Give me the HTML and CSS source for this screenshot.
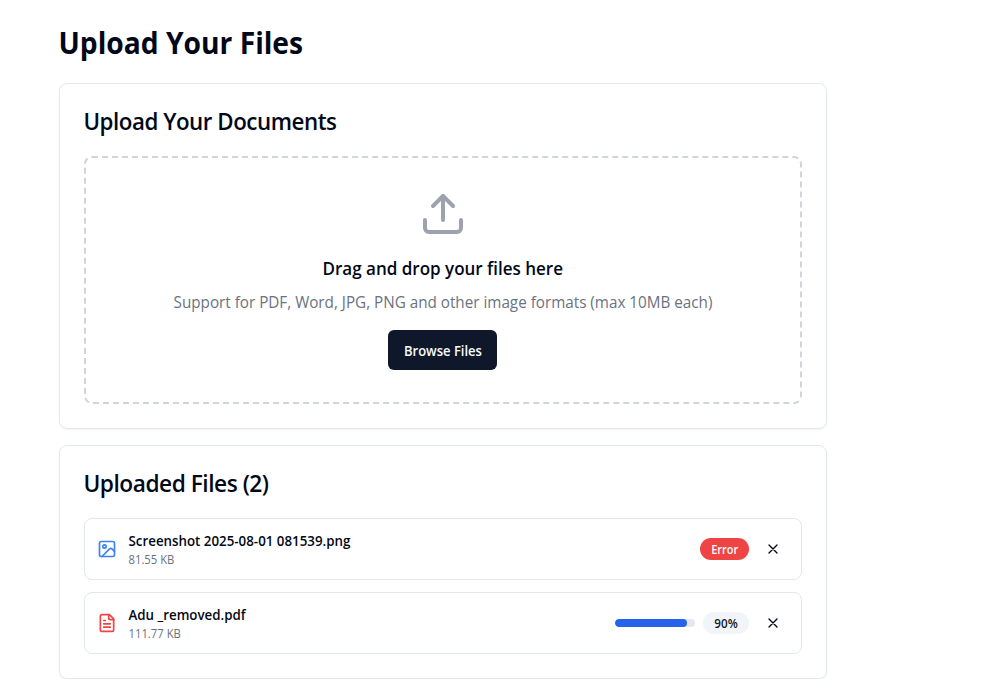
FILE: index.html
```html
<!DOCTYPE html>
<html lang="en">
<head>
<meta charset="utf-8">
<title>Upload Your Files</title>
<link rel="stylesheet" href="styles.css">
</head>
<body>
<main class="page">
  <h1><span class="t t-title">Upload Your Files</span></h1>
  <section class="card upload">
    <h2><span class="t t-docs">Upload Your Documents</span></h2>
    <div class="dropzone">
      <svg class="upload-icon" viewBox="0 0 24 24"><path d="M21 15v4a2 2 0 0 1-2 2H5a2 2 0 0 1-2-2v-4"/><path d="M17 8l-5-5-5 5"/><path d="M12 3v12"/></svg>
      <h3><span class="t t-drag">Drag and drop your files here</span></h3>
      <p class="hint"><span class="t t-hint">Support for PDF, Word, JPG, PNG and other image formats (max 10MB each)</span></p>
      <button class="browse"><span class="t t-browse">Browse Files</span></button>
    </div>
  </section>
  <section class="card files">
    <h2><span class="t t-files">Uploaded Files (2)</span></h2>
    <ul class="list">
      <li class="file">
        <svg class="icon blue" viewBox="0 0 24 24"><rect x="3" y="3" width="18" height="18" rx="2"/><circle cx="9" cy="9" r="2"/><path d="m21 15-3.086-3.086a2 2 0 0 0-2.828 0L6 21"/></svg>
        <div class="info">
          <p class="name"><span class="t t-name">Screenshot 2025-08-01 081539.png</span></p>
          <p class="size"><span class="t t-size">81.55 KB</span></p>
        </div>
        <span class="badge error"><span class="t t-error">Error</span></span>
        <button class="close" aria-label="Remove"><svg viewBox="0 0 24 24"><path d="M18 6 6 18M6 6l12 12"/></svg></button>
      </li>
      <li class="file">
        <svg class="icon red" viewBox="0 0 24 24"><path d="M15 2H6a2 2 0 0 0-2 2v16a2 2 0 0 0 2 2h12a2 2 0 0 0 2-2V7Z"/><path d="M14 2v4a2 2 0 0 0 2 2h4"/><path d="M10 9H8M16 13H8M16 17H8"/></svg>
        <div class="info">
          <p class="name"><span class="t t-name">Adu _removed.pdf</span></p>
          <p class="size"><span class="t t-size">111.77 KB</span></p>
        </div>
        <div class="progress"><div class="bar" style="width:90%"></div></div>
        <span class="badge percent"><span class="t t-pct">90%</span></span>
        <button class="close" aria-label="Remove"><svg viewBox="0 0 24 24"><path d="M18 6 6 18M6 6l12 12"/></svg></button>
      </li>
    </ul>
  </section>
</main>
</body>
</html>
```
FILE: styles.css
```css
* { box-sizing: border-box; margin: 0; padding: 0; }
body { background: #fff; color: #020817; font-family: "Open Sans", "Noto Sans", sans-serif; overflow: hidden; }
.page { width: 768px; margin-left: 59px; padding-top: 24px; }
.t { display: inline-block; white-space: nowrap; transform-origin: left center; }
.t-title { transform: translate(-0.5px, 0.5px) scaleX(.94); }
.t-docs, .t-files { letter-spacing: -0.5px; transform: translate(-0.5px, -1px) scaleX(.93); }
.t-files { transform: translate(-0.5px, -1px) scaleX(.945); }
.t-drag, .t-hint, .t-browse { transform-origin: center; }
.t-drag { transform: translateX(-0.5px) scaleX(.945); }
.t-hint { transform: scaleX(.952); }
.t-browse { transform: scaleX(.93); }
.t-name { transform: translateX(-0.5px) scaleX(.952); }
.t-size { transform: translate(-0.5px, 1px) scaleX(.94); }
.t-error { transform: translateY(1px) scaleX(.92); transform-origin: center; }
.t-pct { transform: translateY(1px) scaleX(.97); transform-origin: center; }
h1 { font-size: 30px; line-height: 36px; font-weight: 700; margin-bottom: 23px; }
.card { border: 1px solid #e2e8f0; border-radius: 8px; padding: 24px; box-shadow: 0 1px 2px rgba(0,0,0,.05); }
.upload { height: 346px; margin-bottom: 16px; }
.files { height: 234px; }
h2 { font-size: 24px; line-height: 24px; font-weight: 600; margin: 2px 0 22px; }
.dropzone { height: 248px; border: 2px dashed #d1d5db; border-radius: 8px; padding: 32px; display: flex; flex-direction: column; align-items: center; }
.upload-icon { width: 48px; height: 48px; color: #9ca3af; margin-bottom: 16px; flex: none; }
svg { fill: none; stroke: currentColor; stroke-width: 2; stroke-linecap: round; stroke-linejoin: round; display: block; }
h3 { font-size: 18px; line-height: 28px; font-weight: 600; margin-bottom: 8px; }
.hint { font-size: 16px; line-height: 24px; color: #6b7280; margin-bottom: 16px; }
button { border: 0; font: inherit; color: inherit; background: none; }
.browse { width: 109px; height: 40px; margin-right: 1px; border-radius: 6px; background: #0f172a; color: #f8fafc; font-size: 14px; font-weight: 600; flex: none; }
.list { list-style: none; display: grid; gap: 12px; }
.file { height: 62px; border: 1px solid #e2e8f0; border-radius: 8px; padding: 0 12px; display: flex; align-items: center; }
.icon { width: 20px; height: 20px; margin-right: 12px; flex: none; }
.blue { color: #3b82f6; }
.red { color: #ef4444; }
.info { flex: 1; }
.name { font-size: 14px; line-height: 20px; font-weight: 600; }
.size { font-size: 12px; line-height: 16px; color: #6b7280; }
.badge { height: 22px; border-radius: 11px; font-size: 12px; line-height: 22px; font-weight: 600; display: flex; justify-content: center; }
.error { width: 49px; background: #ef4444; color: #f8fafc; }
.percent { width: 46px; background: #f1f5f9; color: #0f172a; margin-left: 8px; }
.progress { width: 80px; height: 8px; border-radius: 4px; background: #e5e7eb; overflow: hidden; }
.bar { height: 8px; border-radius: 4px; background: #2563eb; }
.close { width: 32px; height: 32px; margin-left: 8px; display: grid; place-items: center; }
.close svg { width: 16px; height: 16px; }
```
